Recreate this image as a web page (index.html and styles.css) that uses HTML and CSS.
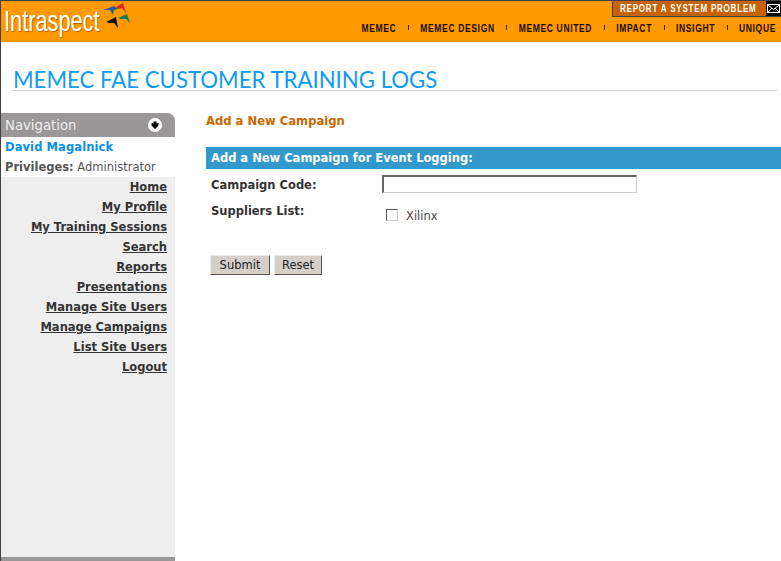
FILE: index.html
```html
<!DOCTYPE html>
<html lang="en">
<head>
  <meta charset="UTF-8" />
  <title>Memec FAE Customer Training Logs</title>
  <link rel="stylesheet" href="styles.css">
</head>
<body>
  <div class="header">
    <div class="logo">
      <span class="logo-text">Intraspect</span>
      <svg class="logo-mark" width="30" height="28" viewBox="0 0 30 28">
        <polygon points="1,8 12,4 16,7 12,8 11,13 8,8" fill="#2a5a9a"/>
        <polygon points="14,5 21,1 24,11 20,6 16,7" fill="#d8281c"/>
        <polygon points="4,20 14,15 16,26 12,21 8,21" fill="#111"/>
        <polygon points="16,16 25,12 28,21 24,17 19,17" fill="#1a7a50"/>
      </svg>
    </div>
    <div class="header-right">
      <div class="report">
        <span class="report-text">REPORT A SYSTEM PROBLEM</span>
        <span class="report-icon">
          <svg width="13" height="9" viewBox="0 0 13 9">
            <rect x="0.5" y="0.5" width="12" height="8" fill="#000" stroke="#fff"/>
            <path d="M1 1 L6.5 5.5 L12 1 M1 8 L5 4 M12 8 L8 4" fill="none" stroke="#fff"/>
          </svg>
        </span>
      </div>
      <div class="topnav">
        <a>MEMEC</a><i></i>
        <a>MEMEC DESIGN</a><i></i>
        <a>MEMEC UNITED</a><i></i>
        <a>IMPACT</a><i></i>
        <a>INSIGHT</a><i></i>
        <a>UNIQUE</a>
      </div>
    </div>
  </div>

  <div class="page-title"><h1>MEMEC FAE CUSTOMER TRAINING LOGS</h1></div>

  <div class="columns">
    <div class="sidebar">
      <div class="nav-head">
        <span>Navigation</span>
        <svg width="14" height="14" viewBox="0 0 14 14">
          <circle cx="7" cy="7" r="7" fill="#fff"/>
          <path d="M3.5 5 L5.5 5.5 L5.5 3.5 H8.5 V5.5 L10.5 5 L10.5 7.5 L7 11 L3.5 7.5 Z" fill="#000"/>
        </svg>
      </div>
      <div class="user">
        <div class="user-name">David Magalnick</div>
        <div class="user-priv"><b>Privileges:</b> Administrator</div>
      </div>
      <div class="links">
        <a>Home</a>
        <a>My Profile</a>
        <a>My Training Sessions</a>
        <a>Search</a>
        <a>Reports</a>
        <a>Presentations</a>
        <a>Manage Site Users</a>
        <a>Manage Campaigns</a>
        <a>List Site Users</a>
        <a>Logout</a>
      </div>
      <div class="side-foot"></div>
    </div>

    <div class="main">
      <h2>Add a New Campaign</h2>
      <div class="form-bar">Add a New Campaign for Event Logging:</div>
      <div class="form-row code-row">
        <label>Campaign Code:</label>
        <div class="text-input"></div>
      </div>
      <div class="form-row list-row">
        <label>Suppliers List:</label>
        <div class="check"><span class="box"></span><span class="check-label">Xilinx</span></div>
      </div>
      <div class="buttons">
        <span class="btn btn-submit">Submit</span>
        <span class="btn btn-reset">Reset</span>
      </div>
    </div>
  </div>
</body>
</html>
```

FILE: styles.css
```css
html, body {
  margin: 0;
  padding: 0;
  height: 100%;
  overflow: hidden;
}

body {
  background: #fff;
  border-left: 1px solid #404040;
  box-sizing: border-box;
  display: flex;
  flex-direction: column;
  font-family: 'DejaVu Sans', Verdana, sans-serif;
  font-size: 11.5px;
  color: #333;
}

.header {
  background: #ff9900;
  border-top: 1px solid #404040;
  height: 41px;
  flex: none;
  display: flex;
  justify-content: space-between;
}

.logo {
  display: flex;
  align-items: flex-start;
  padding: 3px 0 0 3px;
}

.logo-text {
  font-family: 'Liberation Sans', sans-serif;
  font-size: 29px;
  line-height: 34px;
  color: #fff;
  display: inline-block;
  width: 98px;
  white-space: nowrap;
  transform: scaleX(0.75);
  transform-origin: left center;
  text-shadow: 1px 1px 1px #a86000;
}

.logo-mark {
  margin: -2px 0 0 0;
}

.header-right {
  display: flex;
  flex-direction: column;
  align-items: flex-end;
}

.report {
  display: flex;
  height: 15px;
  width: 168px;
  background: #c66200;
  border-left: 1px solid #404040;
  border-bottom: 1px solid #404040;
  justify-content: space-between;
  align-items: center;
}

.report-text {
  font-family: 'Liberation Sans', sans-serif;
  font-weight: bold;
  font-size: 8px;
  letter-spacing: 0.8px;
  color: #fff;
  padding-left: 7px;
  white-space: nowrap;
  transform: scaleY(1.4);
}

.report-icon {
  background: #000;
  width: 15px;
  height: 15px;
  display: flex;
  align-items: center;
  justify-content: center;
}

.topnav {
  display: flex;
  align-items: center;
  margin-top: 5px;
  padding-right: 5px;
  height: 11px;
}

.topnav a {
  font-family: 'Liberation Sans', sans-serif;
  font-weight: bold;
  font-size: 8.5px;
  letter-spacing: 0.65px;
  color: #1a0d00;
  white-space: nowrap;
  transform: scaleY(1.3);
}

.topnav i {
  width: 1px;
  height: 5px;
  background: #402000;
  margin: 0 11.5px;
}

.page-title {
  flex: none;
  height: 48px;
  margin: 0 4px 0 12px;
  border-bottom: 1px solid #ccc;
  display: flex;
  align-items: flex-end;
}

.page-title h1 {
  margin: 0;
  font-family: 'Lato', sans-serif;
  font-weight: 400;
  font-size: 22.2px;
  line-height: 21px;
  color: #0f9bf5;
  white-space: nowrap;
}

.columns {
  flex: 1;
  display: flex;
  margin-top: 22px;
  min-height: 0;
}

.sidebar {
  width: 174px;
  flex: none;
  display: flex;
  flex-direction: column;
}

.nav-head {
  background: #999798;
  height: 24px;
  border-top-right-radius: 8px;
  color: #eee;
  font-size: 13.25px;
  display: flex;
  align-items: center;
  justify-content: space-between;
  padding: 0 13px 0 4px;
}

.user {
  height: 39px;
  padding: 1px 0 0 4px;
}

.user-name {
  color: #0a8fef;
  font-weight: bold;
  letter-spacing: 0.1px;
  line-height: 19px;
  white-space: nowrap;
}

.user-priv {
  color: #555;
  line-height: 20px;
  white-space: nowrap;
}

.links {
  flex: 1;
  background: #eeeeee;
  display: flex;
  flex-direction: column;
  align-items: flex-end;
  padding: 0 8px 0 0;
}

.links a {
  font-weight: bold;
  line-height: 20px;
  height: 20px;
  color: #333;
  text-decoration: underline;
  white-space: nowrap;
}

.side-foot {
  height: 4px;
  background: #999798;
  flex: none;
}

.main {
  flex: 1;
  padding: 0 0 0 31px;
  min-width: 0;
}

.main h2 {
  margin: 0;
  font-size: 11.6px;
  font-weight: bold;
  line-height: 16px;
  color: #cc6600;
}

.form-bar {
  margin-top: 18px;
  height: 22px;
  line-height: 23px;
  background: #3399cc;
  color: #fff;
  font-weight: bold;
  padding-left: 5px;
  white-space: nowrap;
}

.form-row {
  display: flex;
  padding-left: 5px;
}

.form-row label {
  width: 171px;
  flex: none;
  font-weight: bold;
  color: #333;
  line-height: 14px;
}

.code-row {
  margin-top: 6px;
  height: 18px;
}

.code-row label {
  padding-top: 3px;
}

.text-input {
  width: 252px;
  height: 15px;
  background: #fff;
  border-style: solid;
  border-width: 2px 1px 1px 2px;
  border-color: #666 #ccc #ccc #666;
  box-sizing: content-box;
}

.list-row {
  margin-top: 9px;
  height: 53px;
}

.list-row label {
  padding-top: 2px;
}

.check {
  display: flex;
  align-items: center;
  height: 14px;
  margin: 6px 0 0 4px;
  color: #444;
}

.check-label {
  padding-top: 2px;
}

.box {
  width: 10px;
  height: 10px;
  background: #fff;
  border: 1px solid;
  border-color: #555 #ccc #ccc #555;
  margin-right: 8px;
}

.buttons {
  display: flex;
  gap: 4px;
  padding-left: 4px;
}

.btn {
  background: #d4d0c8;
  height: 18px;
  line-height: 19px;
  text-align: center;
  color: #222;
  border: 1px solid;
  border-color: #eee #555 #555 #eee;
}

.btn-submit {
  width: 58px;
}

.btn-reset {
  width: 46px;
}
```
